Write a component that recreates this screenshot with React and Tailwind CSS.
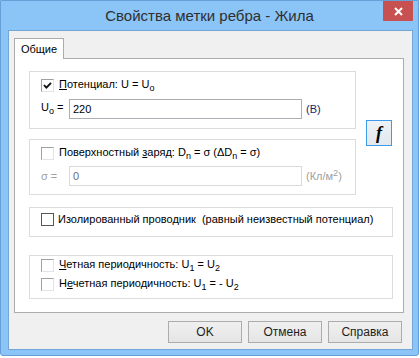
import React from 'react';

const Sub = ({ children }) => (
  <span className="text-[9px] align-[-3px]">{children}</span>
);

// Classic sunken checkbox
const Check = ({ checked, flat }) => {
  if (flat) {
    return <span className="block w-[13px] h-[13px] border border-[#555] bg-white shrink-0" />;
  }
  return (
    <span className="flex w-[13px] h-[13px] border border-t-[#a0a0a0] border-l-[#a0a0a0] border-b-[#e3e3e3] border-r-[#e3e3e3] bg-white items-center justify-center shrink-0">
      {checked && (
        <svg width="9" height="9" viewBox="0 0 9 9">
          <path d="M1 4.2 L3.4 6.6 L8 1.8" stroke="#111" strokeWidth="1.9" fill="none" />
        </svg>
      )}
    </span>
  );
};

const Group = ({ className, children }) => (
  <div className={`border border-[#dcdcdc] bg-white ${className}`}>{children}</div>
);

const Button = ({ children }) => (
  <button className="w-[74px] h-[22px] border border-[#acacac] bg-gradient-to-b from-[#f0f0f0] to-[#e5e5e5] text-[12px] text-[#1e1e1e] leading-none">
    {children}
  </button>
);

export default function App() {
  return (
    <div className="w-[420px] h-[358px] bg-white font-['Liberation_Sans',Arial,sans-serif] text-[11px] text-black">
      <div className="w-[419px] h-[356px] bg-[#8bc4f6] border border-[#66a0d8] rounded-b-[3px] flex flex-col">
        {/* title bar */}
        <div className="h-[29px] grid grid-cols-[1fr_auto_1fr] items-start shrink-0">
          <div />
          <div className="pt-[6px] text-[15px] leading-[18px] text-[#2f2f2f] whitespace-nowrap">
            Свойства метки ребра - Жила
          </div>
          <div className="flex justify-end pr-[5px]">
            <div className="w-[30px] h-[20px] bg-[#c75050] flex items-center justify-center">
              <svg width="9" height="9" viewBox="0 0 9 9">
                <path d="M1 1 L8 8 M8 1 L1 8" stroke="#fff" strokeWidth="2" />
              </svg>
            </div>
          </div>
        </div>

        {/* client area */}
        <div className="ml-[7px] mr-[5px] mb-[5px] flex-1 bg-[#f0f0f0] border border-[#73a6d6] pl-[5px] pt-[7px] pr-[10px] flex flex-col">
          <div className="relative z-10 -mb-px w-[50px] h-[21px] bg-white border border-b-0 border-[#acacac] flex justify-center pt-[4px] leading-[13px]">
            Общие
          </div>
          <div className="w-[390px] h-[255px] bg-white border border-[#acacac] pl-[14px] pt-[12px]">
            <div className="flex">
              <div className="w-[327px]">
                <Group className="h-[58px] pl-[11px] pt-[7px]">
                  <div className="flex items-center h-[13px]">
                    <Check checked />
                    <span className="ml-[5px] whitespace-nowrap">
                      <u className="underline-offset-1">П</u>отенциал: U = U<Sub>o</Sub>
                    </span>
                  </div>
                  <div className="flex items-center h-[20px] mt-[7px]">
                    <span className="w-[28px] whitespace-nowrap">U<Sub>o</Sub> =</span>
                    <div className="w-[233px] h-[20px] border border-[#abadb3] pl-[3px] flex items-center">220</div>
                    <span className="ml-[4px] text-[#1c1c6a]">(В)</span>
                  </div>
                </Group>
                <Group className="h-[56px] mt-[10px] pl-[11px] pt-[7px]">
                  <div className="flex items-center h-[13px]">
                    <Check />
                    <span className="ml-[5px] whitespace-nowrap">
                      Поверхностный <u className="underline-offset-1">з</u>аряд: D<Sub>n</Sub> = σ (ΔD<Sub>n</Sub> = σ)
                    </span>
                  </div>
                  <div className="flex items-center h-[20px] mt-[6px]">
                    <span className="w-[28px] text-[#a0a0a0]">σ =</span>
                    <div className="w-[233px] h-[20px] border border-[#d9d9d9] pl-[3px] flex items-center text-[#6d6d6d]">0</div>
                    <span className="ml-[4px] text-[#a0a0a0] whitespace-nowrap">
                      (Кл/м<span className="text-[9px] align-[4px]">2</span>)
                    </span>
                  </div>
                </Group>
              </div>
              <button className="ml-[10px] mt-[49px] w-[26px] h-[26px] border border-[#3d9be9] bg-gradient-to-b from-[#eef3f8] to-[#e2e8ee] flex items-center justify-center font-['Liberation_Serif',serif] font-bold italic text-[18px] leading-none">
                f
              </button>
            </div>

            <Group className="w-[364px] h-[30px] mt-[12px] pl-[11px] pt-[5px]">
              <div className="flex items-center h-[13px]">
                <Check flat />
                <span className="ml-[4px] whitespace-nowrap">
                  Изолированный проводник&nbsp; (равный неизвестный потенциал)
                </span>
              </div>
            </Group>

            <Group className="w-[364px] h-[44px] mt-[18px] pl-[11px] pt-[3px]">
              <div className="flex items-center h-[13px]">
                <Check />
                <span className="ml-[5px] whitespace-nowrap">
                  <u className="underline-offset-1">Ч</u>етная периодичность: U<Sub>1</Sub> = U<Sub>2</Sub>
                </span>
              </div>
              <div className="flex items-center h-[13px] mt-[6px]">
                <Check />
                <span className="ml-[5px] whitespace-nowrap">
                  Н<u className="underline-offset-1">е</u>четная периодичность: U<Sub>1</Sub> = - U<Sub>2</Sub>
                </span>
              </div>
            </Group>
          </div>

          <div className="flex justify-end gap-[6px] mt-[8px]">
            <Button>OK</Button>
            <Button>Отмена</Button>
            <Button>Справка</Button>
          </div>
        </div>
      </div>
    </div>
  );
}
